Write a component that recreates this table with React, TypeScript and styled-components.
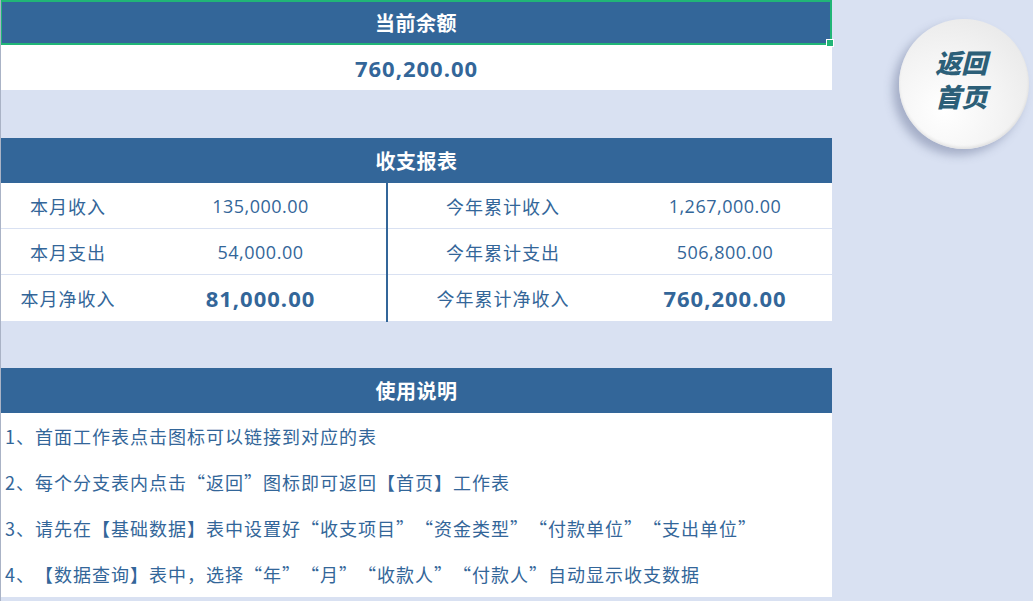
import React from 'react';
import styled, { createGlobalStyle } from 'styled-components';

const GlobalStyle = createGlobalStyle`
  html, body {
    margin: 0;
    padding: 0;
    background: #d9e1f2;
  }
  body {
    font-family: 'Open Sans', 'Noto Sans CJK SC', sans-serif;
    color: #336699;
  }
`;

const Page = styled.div`
  display: flex;
  width: 1033px;
  height: 601px;
  overflow: hidden;
  border-left: 1px solid #aab3c6;
  box-sizing: border-box;
`;

const Sheet = styled.div`
  width: 831px;
  display: flex;
  flex-direction: column;
`;

const Section = styled.section<{ $gap?: number }>`
  margin-top: ${(p) => p.$gap ?? 0}px;
  background: #fff;
`;

const Header = styled.div<{ $selected?: boolean }>`
  position: relative;
  height: 45px;
  background: #336699;
  color: #fff;
  font-size: 20px;
  font-weight: 700;
  letter-spacing: 0.5px;
  display: flex;
  align-items: center;
  justify-content: center;
  box-sizing: border-box;
  border: ${(p) => (p.$selected ? '2px solid #21b577' : 'none')};
  margin-left: ${(p) => (p.$selected ? '-1px' : '0')};
`;

const Handle = styled.span`
  position: absolute;
  right: -4px;
  bottom: -4px;
  width: 6px;
  height: 6px;
  background: #21b577;
  border: 1px solid #fff;
`;

const Balance = styled.div`
  height: 45px;
  display: flex;
  align-items: center;
  justify-content: center;
  font-size: 22px;
  font-weight: 700;
  letter-spacing: 1px;
`;

const Report = styled.div`
  display: grid;
  grid-template-columns: 385px 2px 444px;
`;

const Half = styled.div<{ $cols: string }>`
  display: grid;
  grid-template-columns: ${(p) => p.$cols};
  grid-auto-rows: 46px;
`;

const Divider = styled.div`
  background: #336699;
  margin-bottom: -1px;
`;

const Cell = styled.div<{ $big?: boolean; $last?: boolean; $num?: boolean }>`
  display: flex;
  align-items: center;
  justify-content: center;
  font-size: ${(p) => (p.$big ? '22px' : '18px')};
  font-weight: ${(p) => (p.$big ? 700 : 400)};
  letter-spacing: ${(p) => (p.$big ? '1px' : p.$num ? '0.5px' : '1px')};
  border-bottom: ${(p) => (p.$last ? 'none' : '1px solid #d9e1f2')};
  white-space: nowrap;
`;

const Note = styled.div`
  height: 46px;
  display: flex;
  align-items: center;
  padding-left: 4px;
  font-family: 'Noto Sans CJK SC', sans-serif;
  font-size: 18px;
  letter-spacing: 1px;
  white-space: nowrap;
  text-spacing-trim: space-all;
  font-feature-settings: 'chws' 0, 'halt' 0;
`;

const Side = styled.div`
  flex: 1;
  padding: 19px 0 0 67px;
`;

const HomeButton = styled.button`
  width: 130px;
  height: 130px;
  border-radius: 50%;
  border: none;
  background: radial-gradient(circle at 35% 70%, #ffffff 0%, #f4f4f4 45%, #e4e4e4 100%);
  box-shadow: -6px 6px 10px rgba(70, 80, 120, 0.35), inset 0 -2px 3px rgba(0, 0, 0, 0.08);
  display: flex;
  flex-direction: column;
  align-items: center;
  justify-content: center;
  padding: 0 0 10px 0;
  color: #2c5f78;
  font-family: 'Noto Sans CJK SC', sans-serif;
  font-size: 26px;
  font-weight: 900;
  line-height: 34px;
  cursor: pointer;
`;

const Slant = styled.span`
  display: block;
  transform: skewX(-14deg);
`;

const left = [
  ['本月收入', '135,000.00'],
  ['本月支出', '54,000.00'],
  ['本月净收入', '81,000.00'],
];

const right = [
  ['今年累计收入', '1,267,000.00'],
  ['今年累计支出', '506,800.00'],
  ['今年累计净收入', '760,200.00'],
];

const notes = [
  '1、首面工作表点击图标可以链接到对应的表',
  '2、每个分支表内点击“返回”图标即可返回【首页】工作表',
  '3、请先在【基础数据】表中设置好“收支项目”“资金类型”“付款单位”“支出单位”',
  '4、【数据查询】表中，选择“年”“月”“收款人”“付款人”自动显示收支数据',
];

function Rows({ data }: { data: string[][] }) {
  return (
    <>
      {data.map(([label, value], i) => {
        const last = i === data.length - 1;
        return (
          <React.Fragment key={label}>
            <Cell $last={last}>{label}</Cell>
            <Cell $last={last} $big={last} $num>
              {value}
            </Cell>
          </React.Fragment>
        );
      })}
    </>
  );
}

export default function App() {
  return (
    <>
      <GlobalStyle />
      <Page>
        <Sheet>
          <Section>
            <Header $selected>
              当前余额
              <Handle />
            </Header>
            <Balance>760,200.00</Balance>
          </Section>

          <Section $gap={48}>
            <Header>收支报表</Header>
            <Report>
              <Half $cols="134px 251px">
                <Rows data={left} />
              </Half>
              <Divider />
              <Half $cols="230px 214px">
                <Rows data={right} />
              </Half>
            </Report>
          </Section>

          <Section $gap={47}>
            <Header>使用说明</Header>
            {notes.map((n) => (
              <Note key={n}>{n}</Note>
            ))}
          </Section>
        </Sheet>
        <Side>
          <HomeButton>
            <Slant>返回</Slant>
            <Slant>首页</Slant>
          </HomeButton>
        </Side>
      </Page>
    </>
  );
}
